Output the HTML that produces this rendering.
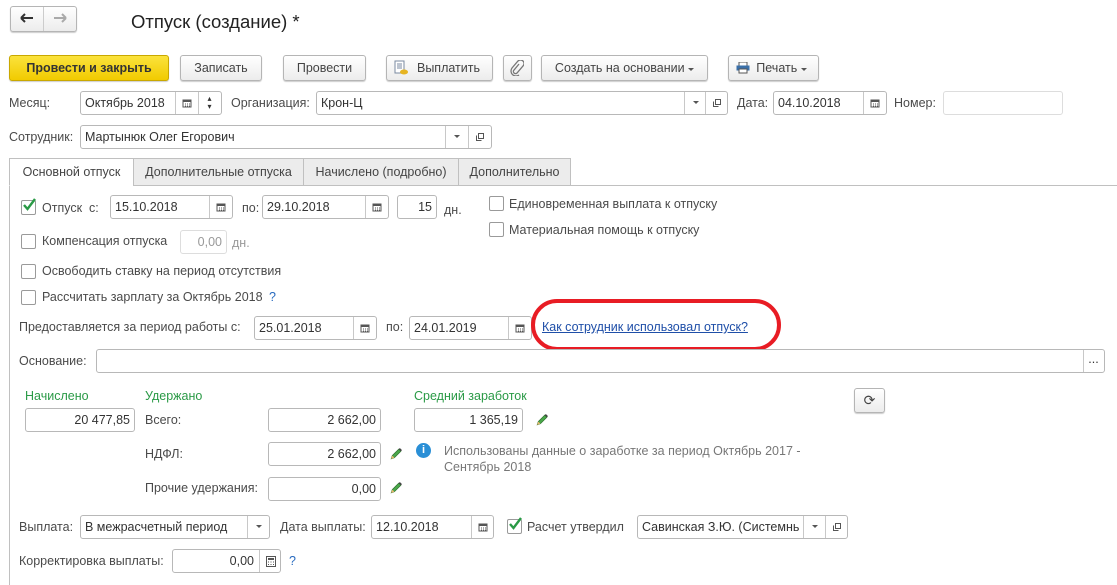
<!DOCTYPE html><html><head><meta charset="utf-8"><style>
*{box-sizing:border-box}
body{margin:0;width:1117px;height:585px;overflow:hidden;background:#fff;font-family:"Liberation Sans",Arial,sans-serif;font-size:12.5px;color:#4a4a4a;position:relative}
.a{position:absolute;white-space:nowrap}
.t{position:absolute;white-space:nowrap;line-height:14px}
.f{position:absolute;border:1px solid #b8b8b8;border-radius:3px;background:#fff;height:24px;line-height:22px;padding:0 4px;color:#333;white-space:nowrap;overflow:hidden}
.r{text-align:right}
.btn{position:absolute;border:1px solid #b5b5b5;border-radius:3px;background:linear-gradient(#fff,#ececec);height:26px;line-height:24px;text-align:center;color:#444;box-shadow:0 1px 1px #ccc}
.sb{position:absolute;top:0;bottom:0;border-left:1px solid #c8c8c8;width:22px;display:flex;align-items:center;justify-content:center}
.cb{position:absolute;width:15px;height:15px;border:1px solid #9a9a9a;border-radius:2px;background:#fff}
.g{color:#2a9a46}
.tab{position:absolute;top:158px;height:28px;border:1px solid #c0c0c0;background:#ececec;line-height:26px;text-align:center;color:#444}
</style></head><body>
<svg width="0" height="0" style="position:absolute"><defs>
<symbol id="cal" viewBox="0 0 10 10"><rect x="1" y="2" width="8" height="7" fill="none" stroke="#555"/><rect x="1" y="2" width="8" height="2" fill="#555"/><path d="M3 6h1M5 6h1M7 6h1M3 8h1M5 8h1M7 8h1" stroke="#555"/></symbol>
<symbol id="dd" viewBox="0 0 6 4"><path d="M0 0h6L3 3z" fill="#555"/></symbol>
<symbol id="op" viewBox="0 0 10 10"><rect x="3.5" y="1.5" width="5" height="5" fill="none" stroke="#555"/><path d="M1.5 3.5v5h5" fill="none" stroke="#555"/></symbol>
<symbol id="pen" viewBox="0 0 12 12"><path d="M2 10l1-3 6-6 2 2-6 6z" fill="#4aa84a" stroke="#2d6e2d" stroke-width=".6"/><path d="M2 10l1-3 2 2z" fill="#e9b66a"/><path d="M9 1l2 2 1-1-2-2z" fill="#444"/></symbol>
<symbol id="chk" viewBox="0 0 16 16"><path d="M3 8l3.5 4L14 2" fill="none" stroke="#2a9a46" stroke-width="2.4"/></symbol>
</defs></svg>

<!-- nav -->
<div class="btn" style="left:10px;top:6px;width:67px;height:26px"></div>
<div class="a" style="left:43px;top:7px;width:1px;height:24px;background:#ccc"></div>
<svg class="a" style="left:20px;top:13px" width="14" height="10" viewBox="0 0 14 10"><path d="M1 5h12M1 5l4-4M1 5l4 4" stroke="#333" stroke-width="2" fill="none"/></svg>
<svg class="a" style="left:53px;top:13px" width="14" height="10" viewBox="0 0 14 10"><path d="M1 5h12M13 5l-4-4M13 5l-4 4" stroke="#aaa" stroke-width="2" fill="none"/></svg>
<div class="a" style="left:131px;top:11px;font-size:18.5px;color:#222">Отпуск (создание) *</div>

<!-- toolbar -->
<div class="btn" style="left:9px;top:55px;width:160px;background:linear-gradient(#fbe33c,#f1cb00);border-color:#c9a800;font-weight:bold;color:#333">Провести и закрыть</div>
<div class="btn" style="left:180px;top:55px;width:82px">Записать</div>
<div class="btn" style="left:283px;top:55px;width:83px">Провести</div>
<div class="btn" style="left:386px;top:55px;width:107px;padding-left:18px">Выплатить</div>
<svg class="a" style="left:393px;top:60px" width="16" height="16" viewBox="0 0 16 16"><rect x="2" y="1" width="9" height="12" fill="#fff" stroke="#7a8aa0"/><path d="M4 4h5M4 6h5M4 8h5" stroke="#7a8aa0"/><ellipse cx="11" cy="12" rx="4" ry="2.5" fill="#e6b422"/></svg>
<div class="btn" style="left:503px;top:55px;width:29px"></div>
<svg class="a" style="left:510px;top:60px" width="14" height="16" viewBox="0 0 14 16"><path d="M9 4L4 10a2 2 0 0 0 3 3l6-7a3.5 3.5 0 0 0-5-5L2 8a5 5 0 0 0 7 7" fill="none" stroke="#777" stroke-width="1.3"/></svg>
<div class="btn" style="left:541px;top:55px;width:167px">Создать на основании <svg width="6" height="4"><use href="#dd"/></svg></div>
<div class="btn" style="left:728px;top:55px;width:91px;padding-left:16px">Печать <svg width="6" height="4"><use href="#dd"/></svg></div>
<svg class="a" style="left:736px;top:62px" width="14" height="12" viewBox="0 0 14 12"><rect x="3" y="0" width="8" height="4" fill="#fff" stroke="#555"/><rect x="0.5" y="3.5" width="13" height="5" fill="#3a6fa8"/><rect x="3" y="7" width="8" height="4" fill="#fff" stroke="#555"/></svg>

<!-- row month -->
<div class="t" style="left:9px;top:96px">Месяц:</div>
<div class="f" style="left:80px;top:91px;width:142px">Октябрь 2018
<div class="sb" style="left:94px"><svg width="10" height="10"><use href="#cal"/></svg></div>
<div class="sb" style="left:117px;font-size:8px;flex-direction:column;line-height:8px">▴<br>▾</div></div>
<div class="t" style="left:231px;top:96px">Организация:</div>
<div class="f" style="left:316px;top:91px;width:412px">Крон-Ц
<div class="sb" style="left:367px"><svg width="6" height="4"><use href="#dd"/></svg></div>
<div class="sb" style="left:388px"><svg width="10" height="10"><use href="#op"/></svg></div></div>
<div class="t" style="left:737px;top:96px">Дата:</div>
<div class="f" style="left:773px;top:91px;width:114px">04.10.2018
<div class="sb" style="left:89px"><svg width="10" height="10"><use href="#cal"/></svg></div></div>
<div class="t" style="left:894px;top:96px">Номер:</div>
<div class="f" style="left:943px;top:91px;width:120px;border-color:#ddd"></div>

<div class="t" style="left:9px;top:130px">Сотрудник:</div>
<div class="f" style="left:80px;top:125px;width:412px">Мартынюк Олег Егорович
<div class="sb" style="left:364px"><svg width="6" height="4"><use href="#dd"/></svg></div>
<div class="sb" style="left:387px"><svg width="10" height="10"><use href="#op"/></svg></div></div>

<!-- tabs -->
<div class="a" style="left:9px;top:185px;width:1108px;height:1px;background:#c0c0c0"></div>
<div class="a" style="left:9px;top:185px;width:1px;height:400px;background:#c0c0c0"></div>
<div class="tab" style="left:9px;width:125px;background:#fff;border-bottom-color:#fff">Основной отпуск</div>
<div class="tab" style="left:133px;width:171px">Дополнительные отпуска</div>
<div class="tab" style="left:303px;width:156px">Начислено (подробно)</div>
<div class="tab" style="left:458px;width:113px">Дополнительно</div>

<!-- otpusk row -->
<div class="cb" style="left:21px;top:200px"></div>
<svg class="a" style="left:21px;top:197px" width="16" height="16"><use href="#chk"/></svg>
<div class="t" style="left:42px;top:201px">Отпуск&nbsp; с:</div>
<div class="f" style="left:110px;top:195px;width:123px">15.10.2018<div class="sb" style="left:98px"><svg width="10" height="10"><use href="#cal"/></svg></div></div>
<div class="t" style="left:242px;top:201px">по:</div>
<div class="f" style="left:262px;top:195px;width:127px">29.10.2018<div class="sb" style="left:102px"><svg width="10" height="10"><use href="#cal"/></svg></div></div>
<div class="f r" style="left:397px;top:195px;width:40px">15</div>
<div class="t" style="left:444px;top:203px">дн.</div>
<div class="cb" style="left:489px;top:196px"></div>
<div class="t" style="left:509px;top:197px">Единовременная выплата к отпуску</div>
<div class="cb" style="left:489px;top:222px"></div>
<div class="t" style="left:509px;top:223px">Материальная помощь к отпуску</div>

<div class="cb" style="left:21px;top:234px"></div>
<div class="t" style="left:42px;top:234px">Компенсация отпуска</div>
<div class="f r" style="left:180px;top:230px;width:47px;border-color:#ddd;color:#999">0,00</div>
<div class="t" style="left:232px;top:236px;color:#999">дн.</div>

<div class="cb" style="left:21px;top:264px"></div>
<div class="t" style="left:42px;top:264px">Освободить ставку на период отсутствия</div>
<div class="cb" style="left:21px;top:290px"></div>
<div class="t" style="left:42px;top:290px">Рассчитать зарплату за Октябрь 2018 <span style="color:#2a6cc0;margin-left:3px">?</span></div>

<div class="t" style="left:19px;top:320px">Предоставляется за период работы с:</div>
<div class="f" style="left:254px;top:316px;width:123px">25.01.2018<div class="sb" style="left:98px"><svg width="10" height="10"><use href="#cal"/></svg></div></div>
<div class="t" style="left:386px;top:320px">по:</div>
<div class="f" style="left:409px;top:316px;width:123px">24.01.2019<div class="sb" style="left:98px"><svg width="10" height="10"><use href="#cal"/></svg></div></div>
<div class="t" style="left:542px;top:320px;color:#1f4fa8;text-decoration:underline">Как сотрудник использовал отпуск?</div>
<div class="a" style="left:531px;top:299px;width:250px;height:52px;border:4px solid #e81c24;border-radius:26px"></div>

<div class="t" style="left:19px;top:354px">Основание:</div>
<div class="f" style="left:96px;top:349px;width:1009px"><div class="sb" style="left:986px;width:20px;align-items:flex-start;line-height:18px">...</div></div>

<!-- totals -->
<div class="t g" style="left:25px;top:389px">Начислено</div>
<div class="f r" style="left:25px;top:408px;width:110px">20 477,85</div>
<div class="t g" style="left:145px;top:389px">Удержано</div>
<div class="t" style="left:145px;top:413px">Всего:</div>
<div class="f r" style="left:268px;top:408px;width:113px">2 662,00</div>
<div class="t g" style="left:414px;top:389px">Средний заработок</div>
<div class="f r" style="left:414px;top:408px;width:109px">1 365,19</div>
<svg class="a" style="left:535px;top:414px" width="13" height="13"><use href="#pen"/></svg>
<div class="btn" style="left:854px;top:388px;width:31px;height:25px;font-size:14px;line-height:22px">⟳</div>

<div class="t" style="left:145px;top:447px">НДФЛ:</div>
<div class="f r" style="left:268px;top:442px;width:113px">2 662,00</div>
<svg class="a" style="left:389px;top:448px" width="13" height="13"><use href="#pen"/></svg>
<div class="a" style="left:416px;top:443px;width:15px;height:15px;border-radius:50%;background:#2a8fd6;color:#fff;font-size:11px;font-weight:bold;text-align:center;line-height:15px">i</div>
<div class="t" style="left:444px;top:443px;color:#777;line-height:16px">Использованы данные о заработке за период Октябрь 2017 -<br>Сентябрь 2018</div>

<div class="t" style="left:145px;top:481px">Прочие удержания:</div>
<div class="f r" style="left:268px;top:477px;width:113px">0,00</div>
<svg class="a" style="left:389px;top:482px" width="13" height="13"><use href="#pen"/></svg>

<div class="t" style="left:19px;top:520px">Выплата:</div>
<div class="f" style="left:80px;top:515px;width:190px">В межрасчетный период<div class="sb" style="left:166px"><svg width="6" height="4"><use href="#dd"/></svg></div></div>
<div class="t" style="left:280px;top:520px">Дата выплаты:</div>
<div class="f" style="left:371px;top:515px;width:123px">12.10.2018<div class="sb" style="left:99px"><svg width="10" height="10"><use href="#cal"/></svg></div></div>
<div class="cb" style="left:507px;top:519px"></div>
<svg class="a" style="left:507px;top:516px" width="16" height="16"><use href="#chk"/></svg>
<div class="t" style="left:527px;top:520px">Расчет утвердил</div>
<div class="f" style="left:637px;top:515px;width:211px">Савинская З.Ю. (Системнь<div class="sb" style="left:165px"><svg width="6" height="4"><use href="#dd"/></svg></div><div class="sb" style="left:187px"><svg width="10" height="10"><use href="#op"/></svg></div></div>

<div class="t" style="left:19px;top:554px">Корректировка выплаты:</div>
<div class="f r" style="left:172px;top:549px;width:109px;padding-right:26px">0,00<div class="sb" style="left:86px"><svg width="10" height="11" viewBox="0 0 10 11"><rect x=".5" y=".5" width="9" height="10" fill="none" stroke="#555"/><rect x="2" y="2" width="6" height="2" fill="#555"/><path d="M2 6h1M4.5 6h1M7 6h1M2 8.5h1M4.5 8.5h1M7 8.5h1" stroke="#555"/></svg></div></div>
<div class="t" style="left:289px;top:554px;color:#2a6cc0">?</div>
</body></html>
